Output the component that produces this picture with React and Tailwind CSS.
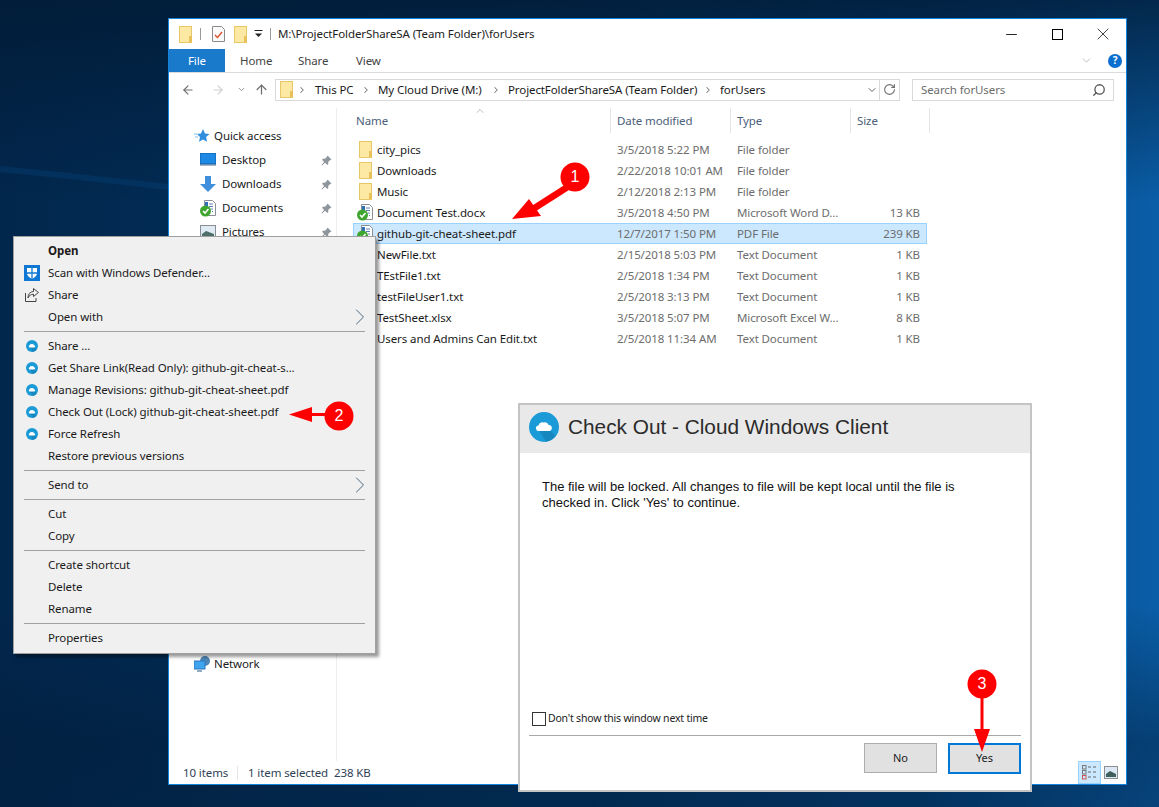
import React from "react";
import { ArrowLeft, ArrowRight, ArrowUp, ChevronDown, ChevronUp, ChevronRight, RotateCw, Search, Minus, X } from "lucide-react";

const ui = "font-['Noto_Sans',sans-serif] text-[11.5px] tracking-[-0.1px]";

// file rows
const FILES = [
  { name: "city_pics", date: "3/5/2018 5:22 PM", type: "File folder", size: "", icon: "folder" },
  { name: "Downloads", date: "2/22/2018 10:01 AM", type: "File folder", size: "", icon: "folder" },
  { name: "Music", date: "2/12/2018 2:13 PM", type: "File folder", size: "", icon: "folder" },
  { name: "Document Test.docx", date: "3/5/2018 4:50 PM", type: "Microsoft Word D...", size: "13 KB", icon: "doc" },
  { name: "github-git-cheat-sheet.pdf", date: "12/7/2017 1:50 PM", type: "PDF File", size: "239 KB", icon: "doc", selected: true },
  { name: "NewFile.txt", date: "2/15/2018 5:03 PM", type: "Text Document", size: "1 KB", icon: "doc" },
  { name: "TEstFile1.txt", date: "2/5/2018 1:34 PM", type: "Text Document", size: "1 KB", icon: "doc" },
  { name: "testFileUser1.txt", date: "2/5/2018 3:13 PM", type: "Text Document", size: "1 KB", icon: "doc" },
  { name: "TestSheet.xlsx", date: "3/5/2018 5:07 PM", type: "Microsoft Excel W...", size: "8 KB", icon: "doc" },
  { name: "Users and Admins Can Edit.txt", date: "2/5/2018 11:34 AM", type: "Text Document", size: "1 KB", icon: "doc" },
];

// null = separator
const MENU = [
  { label: "Open", bold: true },
  { label: "Scan with Windows Defender...", icon: "shield" },
  { label: "Share", icon: "share" },
  { label: "Open with", arrow: true },
  null,
  { label: "Share ...", icon: "cloud" },
  { label: "Get Share Link(Read Only): github-git-cheat-s...", icon: "cloud" },
  { label: "Manage Revisions: github-git-cheat-sheet.pdf", icon: "cloud" },
  { label: "Check Out (Lock) github-git-cheat-sheet.pdf", icon: "cloud" },
  { label: "Force Refresh", icon: "cloud" },
  { label: "Restore previous versions" },
  null,
  { label: "Send to", arrow: true },
  null,
  { label: "Cut" },
  { label: "Copy" },
  null,
  { label: "Create shortcut" },
  { label: "Delete" },
  { label: "Rename" },
  null,
  { label: "Properties" },
];

function Folder({ className = "" }) {
  return (
    <svg width="14" height="17" viewBox="0 0 14 17" className={className}>
      <rect x="0.5" y="0.5" width="12" height="16" fill="#fde9a4" stroke="#e8c767" />
      <rect x="10" y="10" width="3" height="6" fill="#e8c15a" />
    </svg>
  );
}

function CheckedDoc() {
  return (
    <svg width="17" height="17" viewBox="0 0 17 17">
      <path d="M4.500 .5h8l3 3v12h-11z" fill="#fff" stroke="#8a8f96" />
      <path d="M9 4h4M9 6.500h4M11 9h2M12 11.500h1" stroke="#5b7fb5" />
      <rect x="5" y="2" width="3" height="4" fill="#2f6fb5" />
      <circle cx="5.500" cy="11" r="5.500" fill="#3ea52f" />
      <path d="M3 11l2 2 3.500-4" stroke="#fff" strokeWidth="1.600" fill="none" />
    </svg>
  );
}

function Pin() {
  return (
    <svg width="11" height="11" viewBox="0 0 11 11">
      <path d="M6.500 .5l4 4-1.300.6-2 2 .1 2-1 1-2.200-2.300L1 10.500l-.5-.5 2.700-3.100L1 4.700l1-1 2 .1 2-2z" fill="#8f959c" />
    </svg>
  );
}

function CloudBadge({ size = 14 }) {
  return (
    <svg width={size} height={size} viewBox="0 0 30 30">
      <circle cx="15" cy="15" r="15" fill="#1a9ad6" />
      <path d="M10 18L21 18L26.500 24A15 15 0 0 1 17 29.800Z" fill="#1787bf" />
      <path d="M10 19a2.800 2.800 0 0 1-.5-5.600 4 4 0 0 1 5.300-2.800 3.600 3.600 0 0 1 4.800 2.400 3 3 0 0 1 .4 6z" fill="#fff" />
    </svg>
  );
}

function Shield() {
  return (
    <svg width="16" height="16" viewBox="0 0 16 16">
      <rect width="16" height="16" fill="#0f78d4" />
      <path d="M3 3h10v5c0 3-2.500 4.500-5 6-2.500-1.500-5-3-5-6z" fill="#fff" />
      <path d="M8 3v11M3 8h10" stroke="#0f78d4" strokeWidth="1.300" />
    </svg>
  );
}

function ShareGlyph() {
  return (
    <svg width="16" height="16" viewBox="0 0 16 16" fill="none" stroke="#444" strokeWidth="1">
      <path d="M1.500 6v8.500h10.500V11" />
      <path d="M9.500 1.500l5 4-5 4V7.300C7 7.300 5 8.500 4 11c0-4 2-6.300 5.500-6.500z" />
    </svg>
  );
}

function NavItem({ icon, label, pin, indent = true, className = "" }) {
  return (
    <div className={`flex items-center h-6 text-[#1a1a1a] ${indent ? "pl-[31px]" : "pl-[25px]"} ${className}`}>
      <span className={`${indent ? "w-[22px]" : "w-[20px]"} flex justify-start`}>{icon}</span>
      <span className="flex-1">{label}</span>
      {pin && <span className="mr-[4px]"><Pin /></span>}
    </div>
  );
}

function Crumb({ label, w }) {
  return (
    <>
      <ChevronRight size={10} strokeWidth={2.500} className="text-[#7a7a7a] mx-[7px] shrink-0" />
      <span className="shrink-0 whitespace-nowrap" style={{ width: w }}>{label}</span>
    </>
  );
}

function ExplorerWindow() {
  return (
    <div className={`absolute left-[168px] top-[18px] w-[959px] h-[767px] bg-white border border-[#1383dc] flex flex-col ${ui}`}>
      {/* title bar */}
      <div className="h-[30px] flex items-center pl-[10px] shrink-0">
        <Folder />
        <span className="w-px h-[12px] bg-[#9a9a9a] ml-[7px] mr-[11px]" />
        <svg width="13" height="16" viewBox="0 0 13 16" className="mr-[9px]">
          <path d="M.5.5h9l3 3v12H.5z" fill="#fafafa" stroke="#8b8b8b" />
          <path d="M3 9l2.500 2.500L10 6" stroke="#e0492a" strokeWidth="1.300" fill="none" />
        </svg>
        <Folder />
        <svg width="9" height="8" viewBox="0 0 9 8" className="ml-[6px]">
          <path d="M.5 .5h8" stroke="#222" />
          <path d="M1 3.500h7L4.500 7z" fill="#222" />
        </svg>
        <span className="w-px h-[12px] bg-[#9a9a9a] ml-[7px] mr-[7px]" />
        <span className="text-[#222] flex-1">M:\ProjectFolderShareSA (Team Folder)\forUsers</span>
        <Minus size={17} strokeWidth={1.200} className="text-black mr-[32px]" />
        <span className="w-[11px] h-[11px] border border-black mr-[30px]" />
        <X size={20} strokeWidth={0.900} className="text-black mr-[13px]" />
      </div>
      {/* ribbon tabs */}
      <div className="h-[24px] flex items-center border-b border-[#dadbdc] shrink-0 text-[#444]">
        <div className="w-[56px] h-full bg-[#1979ca] text-white flex items-center justify-center">File</div>
        <span className="ml-[15px] w-[58px]">Home</span>
        <span className="w-[58px]">Share</span>
        <span>View</span>
        <ChevronDown size={13} strokeWidth={1} className="text-[#8a8a8a] ml-auto mr-[15px]" />
        <span className="w-[14px] h-[14px] rounded-full bg-[#0a6fce] text-white font-bold flex items-center justify-center text-[10px] mr-[4px]">?</span>
      </div>
      {/* address row */}
      <div className="h-[33px] flex items-center shrink-0">
        <ArrowLeft size={14} strokeWidth={2} className="text-[#6e6e6e] ml-[12px]" />
        <ArrowRight size={14} strokeWidth={2} className="text-[#d0d0d0] ml-[16px]" />
        <ChevronDown size={9} strokeWidth={2.500} className="text-[#8a8a8a] ml-[12px]" />
        <ArrowUp size={15} strokeWidth={2} className="text-[#6e6e6e] ml-[8px]" />
        <div className="ml-[6px] w-[625px] h-[22px] border border-[#d9d9d9] flex items-center pl-[4px] text-[#1a1a1a] overflow-hidden">
          <Folder className="shrink-0" />
          <span className="w-[3px] shrink-0" />
          <ChevronRight size={10} strokeWidth={2.500} className="text-[#7a7a7a] shrink-0 mr-[8px]" />
          <span className="shrink-0 w-[39px] whitespace-nowrap">This PC</span>
          <Crumb label="My Cloud Drive (M:)" w={106} />
          <Crumb label="ProjectFolderShareSA (Team Folder)" w={188} />
          <Crumb label="forUsers" w={50} />
          <ChevronDown size={12} strokeWidth={2} className="text-[#666] ml-auto mr-[1px] shrink-0" />
          <span className="w-px h-full bg-[#d9d9d9] shrink-0" />
          <RotateCw size={13} strokeWidth={2} className="text-[#6e6e6e] mx-[3px] shrink-0" />
        </div>
        <div className="ml-[12px] w-[202px] h-[22px] border border-[#d9d9d9] flex items-center justify-between pl-[8px] pr-[7px] text-[#6d6d6d]">
          <span>Search forUsers</span>
          <Search size={14} strokeWidth={2.200} className="text-[#555] -scale-x-100" />
        </div>
      </div>
      {/* body */}
      <div className="flex-1 flex min-h-0 mt-[2px]">
        <div className="w-[168px] border-r border-[#eeeeee] pt-[16px] shrink-0">
          <NavItem
            indent={false}
            label="Quick access"
            icon={
              <svg width="16" height="16" viewBox="0 0 16 16">
                <path d="M9 1l2 4.500 4.500.5-3.400 3 1 4.800L9 11.500 5 13.800l1-4.800-3-3 4-.5z" fill="#2f8fdc" />
                <path d="M0 6h3M1 9h3" stroke="#7cc0ef" />
              </svg>
            }
          />
          <NavItem
            pin
            label="Desktop"
            icon={
              <svg width="16" height="14" viewBox="0 0 16 14">
                <rect width="16" height="11" fill="#1e88e5" stroke="#0f5fa8" />
                <path d="M0 12h16" stroke="#4a6f90" />
              </svg>
            }
          />
          <NavItem
            pin
            label="Downloads"
            icon={
              <svg width="16" height="16" viewBox="0 0 16 16">
                <path d="M5 0h6v8h5l-8 8-8-8h5z" fill="#3f8fdc" />
              </svg>
            }
          />
          <NavItem pin label="Documents" icon={<CheckedDoc />} />
          <NavItem
            pin
            label="Pictures"
            icon={
              <svg width="16" height="14" viewBox="0 0 16 14">
                <rect x=".5" y=".5" width="15" height="13" fill="#dfeaf5" stroke="#8a8f96" />
                <path d="M2 9l4-3 8 3v3H2z" fill="#4f6f6a" />
              </svg>
            }
          />
          <NavItem
            indent={false}
            className="mt-[408px]"
            label="Network"
            icon={
              <svg width="17" height="16" viewBox="0 0 17 16">
                <circle cx="11" cy="5" r="5" fill="#4f86b5" />
                <rect y="5" width="11" height="8" fill="#3fa4ee" stroke="#2a78c0" />
                <path d="M3 15h5" stroke="#6f8fa8" strokeWidth="1.500" />
              </svg>
            }
          />
        </div>
        <div className="flex-1 min-w-0">
          {/* column headers */}
          <div className="relative flex h-[25px] items-center text-[#4c607a]">
            <ChevronUp size={12} strokeWidth={1} className="absolute left-[137px] -top-[3px] text-[#777]" />
            <span className="w-[273px] pl-[19px]">Name</span>
            <span className="w-[120px] h-full flex items-center pl-[6px] border-l border-[#e5e5e5]">Date modified</span>
            <span className="w-[120px] h-full flex items-center pl-[6px] border-l border-[#e5e5e5]">Type</span>
            <span className="w-[80px] h-full flex items-center pl-[6px] border-x border-[#e5e5e5]">Size</span>
          </div>
          {/* rows */}
          <div className="mt-[6px] ml-[16px] w-[574px]">
            {FILES.map((f) => (
              <div
                key={f.name}
                className={`h-[21px] grid grid-cols-[23px_240px_120px_120px_69px] items-center border ${f.selected ? "bg-[#cce8ff] border-[#99d1ff]" : "border-transparent"}`}
              >
                <span className="flex justify-center items-center">
                  {f.icon === "folder" ? <Folder /> : <CheckedDoc />}
                </span>
                <span className="text-[#1a1a1a] truncate">{f.name}</span>
                <span className="text-[#6d6d6d] whitespace-nowrap">{f.date}</span>
                <span className="text-[#6d6d6d] whitespace-nowrap">{f.type}</span>
                <span className="text-[#6d6d6d] text-right pr-[6px] whitespace-nowrap">{f.size}</span>
              </div>
            ))}
          </div>
        </div>
      </div>
      {/* status bar */}
      <div className="h-[23px] flex items-center pl-[14px] text-[#2f3f55] shrink-0">
        <span className="w-[54px]">10 items</span>
        <span className="w-px h-[14px] bg-[#e5e5e5] mr-[10px]" />
        <span className="w-[86px]">1 item selected</span>
        <span>238 KB</span>
        <div className="ml-auto h-full w-[23px] bg-[#cce8ff] border border-[#99d1ff] flex items-center justify-center">
          <svg width="15" height="15" viewBox="0 0 15 15" fill="none">
            <rect x=".5" y=".5" width="3.500" height="3.500" stroke="#777" />
            <rect x=".5" y="5.500" width="3.500" height="3.500" stroke="#777" />
            <rect x=".5" y="10.500" width="3.500" height="3.500" stroke="#c55" />
            <path d="M6 2h3M11 2h3M6 7h3M11 7h3M6 12h3M11 12h3" stroke="#666" />
          </svg>
        </div>
        <div className="ml-[3px] mr-[8px]">
          <svg width="14" height="13" viewBox="0 0 14 13">
            <rect x=".5" y=".5" width="13" height="12" fill="#dbe9f6" stroke="#8f8f8f" />
            <path d="M2 8l4-3 6 3v3H2z" fill="#3f5f5a" />
          </svg>
        </div>
      </div>
    </div>
  );
}

function ContextMenu() {
  return (
    <div className={`absolute left-[13px] top-[236px] w-[363px] h-[418px] bg-[#f0f0f0] border border-[#a0a0a0] shadow-[3px_3px_3px_rgba(0,0,0,0.4)] pt-[3px] text-[#1a1a1a] ${ui}`}>
      {MENU.map((item, i) =>
        item === null ? (
          <div key={i} className="h-[7px] flex items-center px-[10px]">
            <div className="w-full h-px bg-[#a0a0a0]" />
          </div>
        ) : (
          <div key={item.label} className={`relative h-[22px] flex items-center ${item.bold ? "font-bold" : ""}`}>
            <span className="w-[34px] flex justify-center pl-[2px]">
              {item.icon === "shield" && <Shield />}
              {item.icon === "share" && <ShareGlyph />}
              {item.icon === "cloud" && <CloudBadge size={12} />}
            </span>
            <span className="whitespace-nowrap">{item.label}</span>
            {item.arrow && <ChevronRight size={28} strokeWidth={0.800} className="text-[#3e5c78] absolute right-[1px]" />}
          </div>
        )
      )}
    </div>
  );
}

function CheckOutDialog() {
  return (
    <div className="absolute left-[518px] top-[403px] w-[514px] h-[389px] bg-white border-2 border-[#c4c4c4] flex flex-col font-['Liberation_Sans',Arial,sans-serif]">
      <div className="h-[48px] bg-[#e9e9e9] flex items-center pl-[9px] pb-[5px] shrink-0">
        <CloudBadge size={30} />
        <span className="ml-[9px] text-[20.8px] text-[#2b2b2b]">Check Out - Cloud Windows Client</span>
      </div>
      <p className="mt-[26px] ml-[22px] w-[440px] text-[13px] leading-[16px] text-[#111]">
        The file will be locked. All changes to file will be kept local until the file is checked in. Click 'Yes' to continue.
      </p>
      <div className="mt-auto ml-[12px] flex items-center h-[14px] text-[#222]">
        <span className="w-[14px] h-[14px] border border-[#333] bg-white mr-[2px] shrink-0" />
        <span className="font-['Noto_Sans',sans-serif] text-[10.5px] tracking-[-0.2px]">Don't show this window next time</span>
      </div>
      <div className="mt-[9px] mx-[9px] h-px bg-[#a9a9a9]" />
      <div className="mt-[7px] mb-[16px] flex justify-end pr-[9px] gap-[11px]">
        <button className="w-[73px] h-[30px] bg-[#e1e1e1] border border-[#adadad] text-[#222] font-['Noto_Sans',sans-serif] text-[11px]">No</button>
        <button className="w-[73px] h-[31px] bg-[#e1e1e1] border-2 border-[#0078d7] text-[#222] font-['Noto_Sans',sans-serif] text-[11px]">Yes</button>
      </div>
    </div>
  );
}

function Wallpaper() {
  return (
    <svg className="absolute inset-0" width="1159" height="807" viewBox="0 0 1159 807">
      <defs>
        <linearGradient id="base" x1="0" y1="0" x2="1" y2="0">
          <stop offset="0" stopColor="#02274d" />
          <stop offset="0.5" stopColor="#023463" />
          <stop offset="0.8" stopColor="#04427c" />
          <stop offset="1" stopColor="#0a5ea8" />
        </linearGradient>
        <linearGradient id="shade" x1="0" y1="0" x2="0" y2="1">
          <stop offset="0" stopColor="#011a34" stopOpacity="0.8" />
          <stop offset="0.25" stopColor="#011a34" stopOpacity="0" />
          <stop offset="0.75" stopColor="#011a34" stopOpacity="0" />
          <stop offset="0.92" stopColor="#011a34" stopOpacity="0.45" />
          <stop offset="1" stopColor="#011a34" stopOpacity="0.4" />
        </linearGradient>
      </defs>
      <rect width="1159" height="807" fill="url(#base)" />
      <rect width="1159" height="807" fill="url(#shade)" />
      <path d="M0 166L60 172L168 184V190L60 178L0 172Z" fill="#064a84" opacity="0.3" />
    </svg>
  );
}

// red numbered markers with arrows, over everything else
function Annotations() {
  return (
    <>
      <svg className="absolute inset-0 pointer-events-none" width="1159" height="807" viewBox="0 0 1159 807">
        <g fill="#ff0000">
          <path d="M566 184L530 207L533 213L569 190Z" />
          <path d="M512 219L529 199L541 216Z" />
          <path d="M309 413h20v3h-20z" />
          <path d="M289 414.500L312 407V422Z" />
          <path d="M980.500 690h3v42h-3z" />
          <path d="M982 752L974 729H990Z" />
          <circle cx="575" cy="177" r="14.500" />
          <circle cx="339" cy="416" r="14.500" />
          <circle cx="982" cy="684" r="14.500" />
        </g>
      </svg>
      {[["left-[561px] top-[163px]", "1"], ["left-[325px] top-[402px]", "2"], ["left-[968px] top-[670px]", "3"]].map(([pos, n]) => (
        <span key={n} className={`absolute ${pos} w-[28px] h-[28px] flex items-center justify-center text-white text-[16px] font-['Liberation_Sans',Arial,sans-serif]`}>
          {n}
        </span>
      ))}
    </>
  );
}

export default function App() {
  return (
    <div className="relative w-[1159px] h-[807px] overflow-hidden">
      <Wallpaper />
      <ExplorerWindow />
      <ContextMenu />
      <CheckOutDialog />
      <Annotations />
    </div>
  );
}
